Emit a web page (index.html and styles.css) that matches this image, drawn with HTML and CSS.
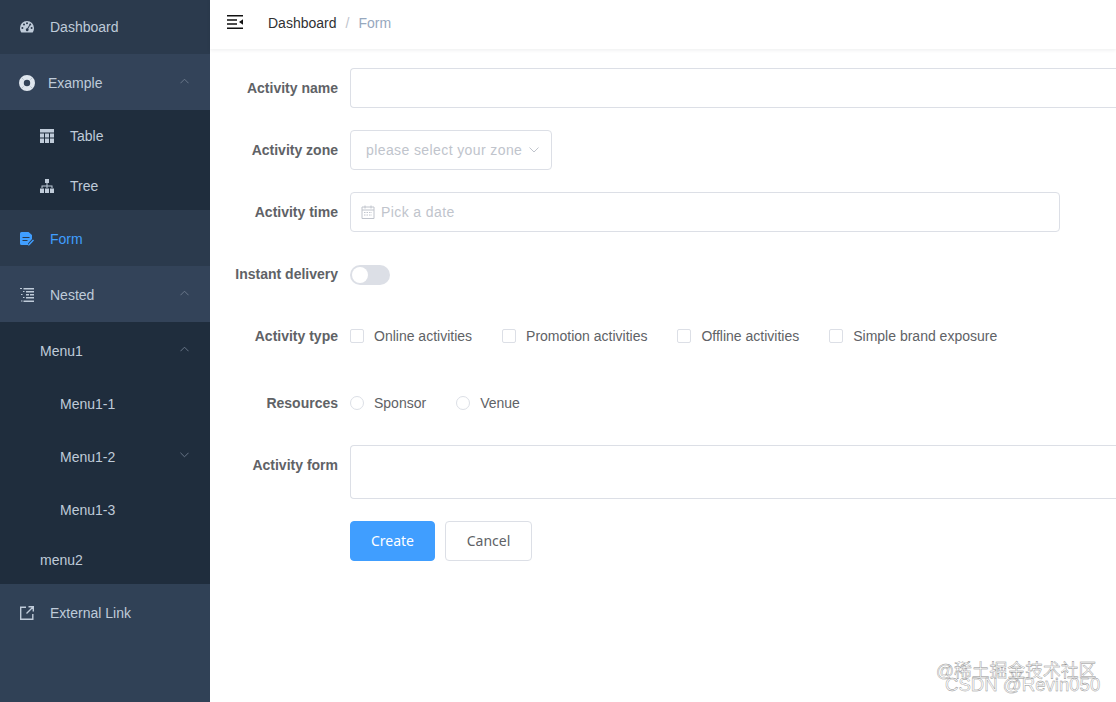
FILE: index.html
```html
<!DOCTYPE html>
<html lang="en">
<head>
  <meta charset="UTF-8" />
  <title>Form</title>
  <link rel="stylesheet" href="styles.css">
</head>
<body>
  <!-- Sidebar -->
  <aside class="sidebar">
    <a class="item top dark">
      <svg class="icon" viewBox="0 0 14 14"><path fill="currentColor" fill-rule="evenodd" d="M7 1a7 7 0 0 0-7 7c0 1.700.5 3.200 1.300 4.500h11.400C13.500 11.200 14 9.700 14 8a7 7 0 0 0-7-7zM2.400 7.100a1 1 0 1 1 0 2 1 1 0 0 1 0-2zM4 3.500a1 1 0 1 1 0 2 1 1 0 0 1 0-2zM7 2.200a1 1 0 1 1 0 2 1 1 0 0 1 0-2zm3.200 1.300a1 1 0 1 1 0 2 1 1 0 0 1 0-2zm1.400 3.600a1 1 0 1 1 0 2 1 1 0 0 1 0-2zM9.300 4.900l.8.500-1.900 3.300a1.400 1.400 0 1 1-.9-.4z"/></svg>
      <span>Dashboard</span>
    </a>
    <a class="item top light">
      <svg class="icon icon-ring" viewBox="0 0 16 16"><circle cx="8" cy="8" r="5.600" fill="none" stroke="#dfe6ee" stroke-width="4.800"/><path d="M2.300 2.300l2.400 2.400M13.700 2.300l-2.400 2.400M2.300 13.700l2.400-2.400M13.700 13.700l-2.400-2.400" stroke="#8d9bab" stroke-width=".5"/></svg>
      <span>Example</span>
      <svg class="arrow" viewBox="0 0 10 6"><path d="M.5 5.500L5 1l4.500 4.500"/></svg>
    </a>
    <a class="item sub">
      <svg class="icon" viewBox="0 0 14 14"><path fill="currentColor" d="M0 0h14v3.500H0zM0 4.500h4v4H0zM5 4.500h4v4H5zM10 4.500h4v4h-4zM0 9.500h4V14H0zM5 9.500h4V14H5zM10 9.500h4V14h-4z"/></svg>
      <span>Table</span>
    </a>
    <a class="item sub">
      <svg class="icon" viewBox="0 0 14 14"><path fill="currentColor" d="M5 0h4v4H7.500v2.500H12.500V9h-1V7.500h-4V9h-1V7.500h-4V9h-1V6.500h5V4H5zM0 9.500h4V14H0zM5 9.500h4V14H5zM10 9.500h4V14h-4z"/></svg>
      <span>Tree</span>
    </a>
    <a class="item top dark active">
      <svg class="icon" viewBox="0 0 14 14"><path fill="currentColor" d="M1.500 0h7L12 3v4l-4 4.500V13H1.500A1.500 1.500 0 0 1 0 11.500v-10A1.500 1.500 0 0 1 1.500 0z"/><path d="M2.500 5.500h7M2.500 8.500h5" stroke="#2b3a4d" stroke-width="1.100"/><path fill="currentColor" d="M13 7.500l1 1-4.500 4.800-1.500.5.400-1.500z"/></svg>
      <span>Form</span>
    </a>
    <a class="item top light">
      <svg class="icon" viewBox="0 0 14 14"><path fill="currentColor" d="M0 0h2v1H0zM3.500 0H14v1.500H3.500zM3 3h1.500v1H3zM6 3h8v1.500H6zM1 6h1.500v1H1zM6 6h3v1.500H6zM10 6h4v1.500h-4zM3 9h1.500v1H3zM6 9h8v1.500H6zM1 12.500h1.500v1H1zM3.500 12.500H14V14H3.500z"/></svg>
      <span>Nested</span>
      <svg class="arrow" viewBox="0 0 10 6"><path d="M.5 5.500L5 1l4.500 4.500"/></svg>
    </a>
    <a class="item sub tall">
      <span>Menu1</span>
      <svg class="arrow" viewBox="0 0 10 6"><path d="M.5 5.500L5 1l4.500 4.500"/></svg>
    </a>
    <a class="item sub deep"><span>Menu1-1</span></a>
    <a class="item sub deep">
      <span>Menu1-2</span>
      <svg class="arrow down" viewBox="0 0 10 6"><path d="M.5.500L5 5l4.500-4.500"/></svg>
    </a>
    <a class="item sub deep"><span>Menu1-3</span></a>
    <a class="item sub last"><span>menu2</span></a>
    <a class="item top">
      <svg class="icon" viewBox="0 0 14 14"><path fill="none" stroke="currentColor" stroke-width="1.400" d="M6 1.200H.7v12.100h12.100V8M8.500.7h4.800v4.800M13 1L6.500 7.500"/></svg>
      <span>External Link</span>
    </a>
  </aside>

  <div class="main">
    <!-- Top bar -->
    <header class="navbar">
      <svg class="hamburger" viewBox="0 0 16 14"><path d="M0 .7h16M0 5h10M0 9h10M0 13.300h16" stroke="#111" stroke-width="1.400"/><path fill="#111" d="M16 4.200v5.600L12 7z"/></svg>
      <span class="crumb">Dashboard</span>
      <span class="sep">/</span>
      <span class="crumb current">Form</span>
    </header>

    <!-- Form -->
    <form class="form">
      <div class="row">
        <label>Activity name</label>
        <div class="input wide"></div>
      </div>
      <div class="row">
        <label>Activity zone</label>
        <div class="input select">
          <span class="placeholder">please select your zone</span>
          <svg class="select-arrow" viewBox="0 0 10 6"><path d="M.5.500L5 5l4.500-4.500"/></svg>
        </div>
      </div>
      <div class="row">
        <label>Activity time</label>
        <div class="input date">
          <svg class="cal" viewBox="0 0 14 14"><path fill="none" stroke="#c0c4cc" d="M1 2h12v11.500H1zM1 5h12M4 .5v3M10 .5v3"/><path stroke="#c0c4cc" stroke-dasharray="1.500 1" d="M3 7.500h8M3 10h8"/></svg>
          <span class="placeholder">Pick a date</span>
        </div>
      </div>
      <div class="row">
        <label>Instant delivery</label>
        <div class="switch"><i></i></div>
      </div>
      <div class="row row-type">
        <label>Activity type</label>
        <div class="options">
          <span class="option check"><i></i>Online activities</span>
          <span class="option check"><i></i>Promotion activities</span>
          <span class="option check"><i></i>Offline activities</span>
          <span class="option check"><i></i>Simple brand exposure</span>
        </div>
      </div>
      <div class="row">
        <label>Resources</label>
        <div class="options">
          <span class="option radio"><i></i>Sponsor</span>
          <span class="option radio"><i></i>Venue</span>
        </div>
      </div>
      <div class="row row-area">
        <label>Activity form</label>
        <div class="input wide area"></div>
      </div>
      <div class="row row-btn">
        <button type="button" class="btn primary">Create</button>
        <button type="button" class="btn">Cancel</button>
      </div>
    </form>
  </div>

  <!-- Watermarks -->
  <span class="mark mark-juejin">@稀土掘金技术社区</span>
  <span class="mark mark-csdn">CSDN @Revin050</span>
</body>
</html>
```

FILE: styles.css
```css
:root {
  --side: #304156;
  --side-dark: #2b3a4d;
  --side-light: #334359;
  --side-sub: #1f2d3d;
  --side-text: #bfcbd9;
  --blue: #409eff;
  --line: #dcdfe6;
}

html, body {
  height: 100%;
}

body {
  margin: 0;
  display: flex;
  overflow: hidden;
  font-family: "Liberation Sans", Arial, sans-serif;
  font-size: 14px;
  background: #fff;
}

/* sidebar */
.sidebar {
  width: 210px;
  flex: none;
  background: var(--side);
  color: var(--side-text);
}

.item {
  display: flex;
  align-items: center;
  box-sizing: border-box;
  height: 50px;
  padding: 2px 21px 0 20px;
}

.item.top {
  height: 56px;
}

.item.top:first-child {
  height: 54px;
  padding-top: 0;
}

.item.dark {
  background: var(--side-dark);
}

.item.light {
  background: var(--side-light);
}

.item.active {
  color: var(--blue);
}

.item.sub {
  background: var(--side-sub);
  padding-left: 40px;
}

.item.tall {
  height: 56px;
}

.item.deep {
  height: 53px;
  padding-top: 0;
  padding-bottom: 1px;
  padding-left: 60px;
}

.item.last {
  height: 47px;
  padding-top: 0;
  padding-bottom: 2px;
}

.icon {
  width: 14px;
  height: 14px;
  margin-right: 16px;
  flex: none;
}

.icon-ring {
  width: 16px;
  height: 16px;
  margin-left: -1px;
  margin-right: 13px;
}

.arrow {
  width: 9px;
  height: 6px;
  margin-left: auto;
  margin-top: -4px;
  fill: none;
  stroke: #6f7d8e;
}

/* navbar */
.main {
  flex: 1;
  min-width: 0;
}

.navbar {
  height: 49px;
  display: flex;
  align-items: center;
  padding-left: 17px;
  padding-bottom: 4px;
  margin-bottom: 1px;
  box-sizing: border-box;
  box-shadow: 0 1px 4px rgba(0, 21, 41, .08);
  color: #303133;
}

.hamburger {
  width: 16px;
  height: 14px;
  margin-right: 25px;
  margin-top: -2px;
}

.sep {
  margin: 0 9px;
  color: #c0c4cc;
}

.crumb.current {
  color: #97a8be;
}

/* form */
.form {
  padding-top: 18px;
}

.row {
  display: flex;
  align-items: center;
  min-height: 40px;
  margin-bottom: 22px;
}

.row label {
  width: 140px;
  padding-right: 12px;
  box-sizing: border-box;
  flex: none;
  text-align: right;
  font-weight: bold;
  color: #606266;
}

.row-type {
  margin-bottom: 27px;
}

.row-area {
  align-items: flex-start;
}

.row-area label {
  line-height: 40px;
}

.row-btn {
  padding-left: 140px;
}

.input {
  box-sizing: border-box;
  height: 40px;
  border: 1px solid var(--line);
  border-radius: 4px;
  background: #fff;
  display: flex;
  align-items: center;
}

/* the wide fields run on past the window edge */
.input.wide {
  flex: 1;
  border-right: 0;
  border-radius: 4px 0 0 4px;
}

.input.area {
  height: 54px;
}

.input.select {
  width: 202px;
  padding: 0 12px 0 15px;
}

.input.date {
  width: 710px;
  padding-left: 10px;
}

.placeholder {
  color: #c0c4cc;
  white-space: nowrap;
  letter-spacing: .4px;
}

.select-arrow {
  width: 10px;
  height: 6px;
  margin-left: auto;
  fill: none;
  stroke: #c0c4cc;
}

.cal {
  width: 14px;
  height: 14px;
  margin-right: 6px;
}

.switch {
  width: 40px;
  height: 20px;
  margin-top: 2px;
  border-radius: 10px;
  background: var(--line);
  display: flex;
  align-items: center;
  padding-left: 2px;
  box-sizing: border-box;
}

.switch i {
  width: 16px;
  height: 16px;
  border-radius: 50%;
  background: #fff;
}

.options {
  display: flex;
  align-items: center;
  color: #606266;
}

.option {
  display: flex;
  align-items: center;
  margin-right: 30px;
  white-space: nowrap;
}

.option i {
  width: 14px;
  height: 14px;
  box-sizing: border-box;
  border: 1px solid var(--line);
  background: #fff;
  margin-right: 10px;
}

.option.check i {
  border-radius: 2px;
}

.option.radio i {
  border-radius: 50%;
}

.btn {
  height: 40px;
  width: 87px;
  padding: 0 0 2px;
  margin-right: 10px;
  border: 1px solid var(--line);
  border-radius: 4px;
  background: #fff;
  color: #606266;
  font-family: "Noto Sans", sans-serif;
  font-size: 14px;
}

.btn.primary {
  width: 85px;
  background: var(--blue);
  border-color: var(--blue);
  color: #fff;
}

/* watermarks over the page */
.mark {
  position: absolute;
  white-space: nowrap;
  line-height: 14px;
  color: rgba(255, 255, 255, .6);
  -webkit-text-stroke: .4px #8a8a8a;
  font-family: "Liberation Sans", "Noto Sans CJK SC", sans-serif;
}

.mark-juejin {
  left: 936px;
  top: 664px;
  font-size: 17.8px;
}

.mark-csdn {
  left: 945px;
  top: 678px;
  font-size: 18.6px;
}
```
